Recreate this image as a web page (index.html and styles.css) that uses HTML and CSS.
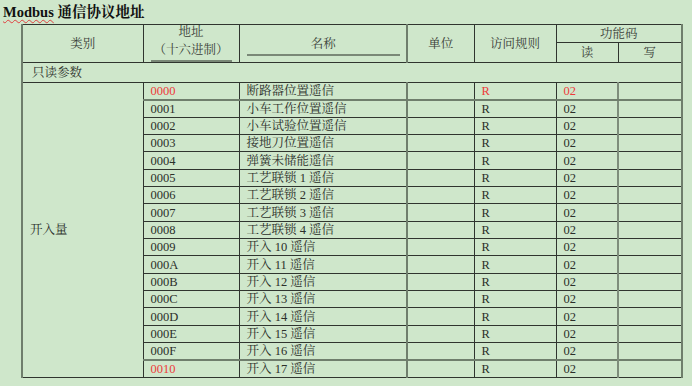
FILE: index.html
```html
<!DOCTYPE html>
<html lang="zh">
<head>
<meta charset="utf-8">
<title>Modbus 通信协议地址</title>
<link rel="stylesheet" href="styles.css">
</head>
<body>
<div class="page">
  <h1 class="title"><span class="spell">Modbus</span> 通信协议地址</h1>
  <table class="proto">
    <colgroup>
      <col class="c1"><col class="c2"><col class="c3"><col class="c4"><col class="c5"><col class="c6"><col class="c7">
    </colgroup>
    <thead>
      <tr class="hr1">
        <th rowspan="2" class="gl">类别</th>
        <th rowspan="2">地址<div class="ul addr">（十六进制）</div></th>
        <th rowspan="2" class="gr"><div class="ul name">名称</div></th>
        <th rowspan="2">单位</th>
        <th rowspan="2">访问规则</th>
        <th colspan="2" class="grr">功能码</th>
      </tr>
      <tr class="hr2">
        <th>读</th>
        <th class="grr">写</th>
      </tr>
    </thead>
    <tbody>
      <tr class="section"><td colspan="7" class="gl grr">只读参数</td></tr>
      <tr class="first"><td rowspan="17" class="gl cat">开入量</td><td class="red">0000</td><td class="gr">断路器位置遥信</td><td></td><td class="red">R</td><td class="red rw">02</td><td class="grr"></td></tr>
      <tr><td>0001</td><td class="gr">小车工作位置遥信</td><td></td><td>R</td><td class="rw">02</td><td class="grr"></td></tr>
      <tr><td>0002</td><td class="gr">小车试验位置遥信</td><td></td><td>R</td><td class="rw">02</td><td class="grr"></td></tr>
      <tr><td>0003</td><td class="gr">接地刀位置遥信</td><td></td><td>R</td><td class="rw">02</td><td class="grr"></td></tr>
      <tr><td>0004</td><td class="gr">弹簧未储能遥信</td><td></td><td>R</td><td class="rw">02</td><td class="grr"></td></tr>
      <tr><td>0005</td><td class="gr">工艺联锁 1 遥信</td><td></td><td>R</td><td class="rw">02</td><td class="grr"></td></tr>
      <tr><td>0006</td><td class="gr">工艺联锁 2 遥信</td><td></td><td>R</td><td class="rw">02</td><td class="grr"></td></tr>
      <tr><td>0007</td><td class="gr">工艺联锁 3 遥信</td><td></td><td>R</td><td class="rw">02</td><td class="grr"></td></tr>
      <tr><td>0008</td><td class="gr">工艺联锁 4 遥信</td><td></td><td>R</td><td class="rw">02</td><td class="grr"></td></tr>
      <tr><td>0009</td><td class="gr">开入 10 遥信</td><td></td><td>R</td><td class="rw">02</td><td class="grr"></td></tr>
      <tr><td>000A</td><td class="gr">开入 11 遥信</td><td></td><td>R</td><td class="rw">02</td><td class="grr"></td></tr>
      <tr><td>000B</td><td class="gr">开入 12 遥信</td><td></td><td>R</td><td class="rw">02</td><td class="grr"></td></tr>
      <tr><td>000C</td><td class="gr">开入 13 遥信</td><td></td><td>R</td><td class="rw">02</td><td class="grr"></td></tr>
      <tr><td>000D</td><td class="gr">开入 14 遥信</td><td></td><td>R</td><td class="rw">02</td><td class="grr"></td></tr>
      <tr><td>000E</td><td class="gr">开入 15 遥信</td><td></td><td>R</td><td class="rw">02</td><td class="grr"></td></tr>
      <tr><td>000F</td><td class="gr">开入 16 遥信</td><td></td><td>R</td><td class="rw">02</td><td class="grr"></td></tr>
      <tr class="last"><td class="red">0010</td><td class="gr">开入 17 遥信</td><td></td><td>R</td><td class="rw">02</td><td class="grr"></td></tr>
    </tbody>
  </table>
</div>
</body>
</html>
```

FILE: styles.css
```css
html, body {
  margin: 0;
  padding: 0;
  background: #cfe7cb;
}

body {
  font-family: "Liberation Serif", "Noto Serif CJK SC", "Noto Sans CJK SC", serif;
  color: #2b2f2a;
  font-size: 12.5px;
}

.page {
  padding: 0 0 0 3px;
}

.title {
  margin: 0;
  height: 24px;
  line-height: 25px;
  font-size: 14.5px;
  font-weight: bold;
  color: #111;
}

.spell {
  text-decoration: underline wavy #e04040;
  text-decoration-thickness: 1px;
  text-underline-offset: 2px;
}

.proto {
  margin-left: 18px;
  width: 660px;
  table-layout: fixed;
  border-collapse: collapse;
}

.c1 { width: 121px; }
.c2 { width: 96px; }
.c3 { width: 168px; }
.c4 { width: 67px; }
.c5 { width: 82px; }
.c6 { width: 62px; }
.c7 { width: 64px; }

.proto th,
.proto td {
  border: 1px solid #30352f;
  padding: 0 0 0 7px;
  line-height: 14px;
  white-space: nowrap;
  overflow: hidden;
}

.proto th {
  font-weight: normal;
  text-align: center;
  padding: 0;
  color: #3a3f39;
}

.hr1 { height: 18px; }
.hr2 { height: 19px; }

.section { height: 20px; }
.section td { padding-left: 9px; }

.proto tbody tr { height: 17.35px; }
.proto tbody tr.section { height: 20px; }

.cat {
  padding-left: 8px;
  vertical-align: middle;
}

.ul {
  border-bottom: 2px solid #7a8877;
}

.addr {
  margin: 4px 7px 0 7px;
  padding-bottom: 3px;
}

.name {
  margin: 6px 6px 0 7px;
  padding-bottom: 3px;
}

.proto .gl { border-left: 2px solid #6f7e6c; }
.proto .gr { border-right: 2px solid #6f7e6c; }
.proto .grr { border-right: 2px solid #6f7e6c; }
.proto td.rw { border-right: 2px solid #7e8d7b; }

.proto tr.first td { border-bottom: 2px solid #6f7e6c; }
.proto tr.first td.cat { border-bottom: 1px solid #30352f; }
.proto tr.last td { border-top: 2px solid #6f7e6c; }

.red { color: #ee3b3b; }
```
